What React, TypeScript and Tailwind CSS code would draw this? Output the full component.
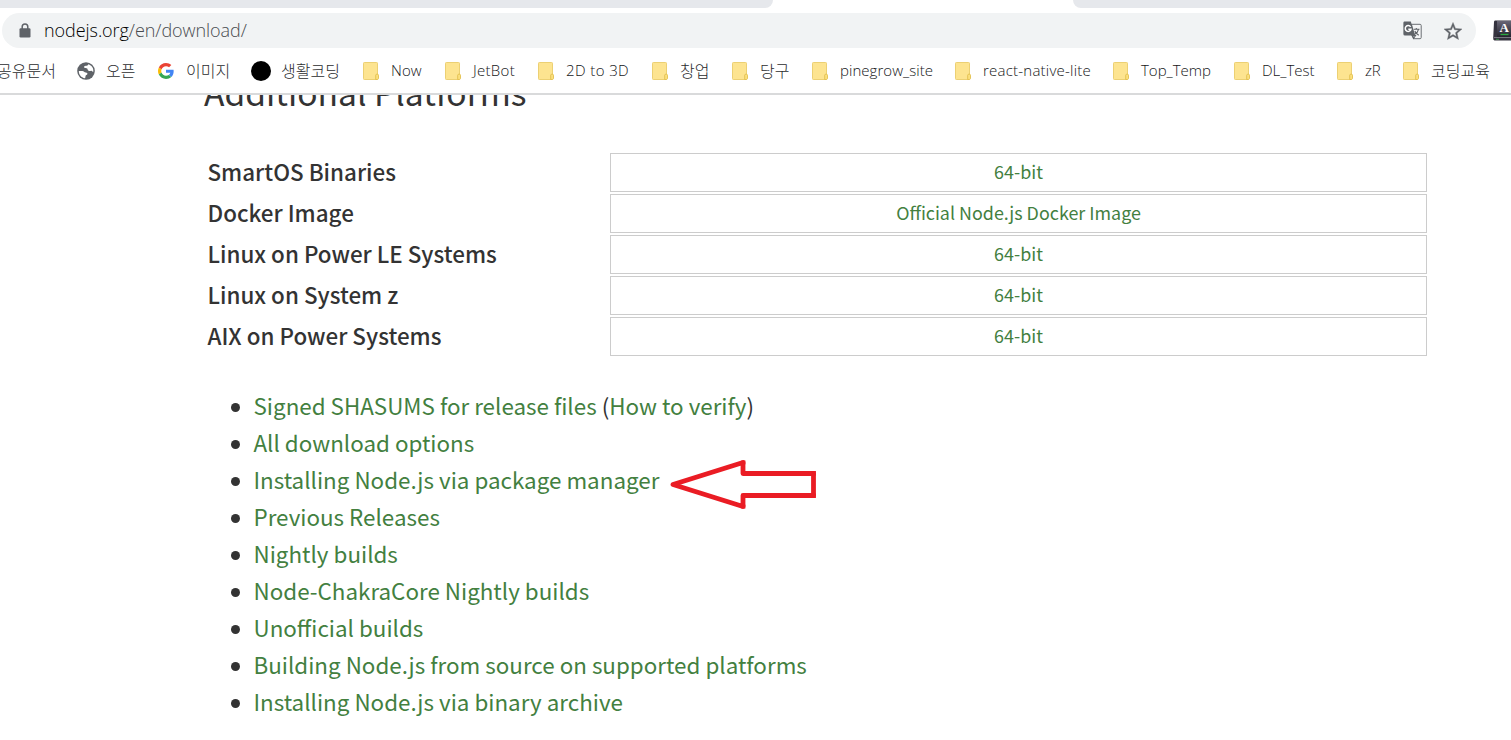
import React from "react";

const sans = "font-['Noto_Sans_CJK_KR','Noto_Sans',sans-serif]";

const GlobeIcon = () => (
  <svg width="18" height="18" viewBox="0 0 18 18">
    <circle cx="9" cy="9" r="8.8" fill="#5f6368" />
    <path d="M1.800 8.900h3.600c1.500 0 1.900 1.600 3.300 1.600 1.400 0 2 .7 1.600 1.800-.3.900-1.800.7-1.800 1.900 0 1-.2 1.600-.6 2C4.200 15.400 1.800 12.700 1.800 8.900Z" fill="#fff" />
    <path d="M11.300 2.200c-.3 1.400-1.200 1.500-2.500 1.500-1.300 0-2 .8-1.600 1.700.5 1 2.300.4 3 1.200.6.700.3 1.700 1.400 2.200 1.200.5 1.900-.3 2.800-.1.900.2.900 1 1.800 1.200C17 6.400 14.900 3.200 11.300 2.200Z" fill="#fff" />
  </svg>
);

const GoogleIcon = () => (
  <svg width="16" height="16" viewBox="0 0 48 48">
    <path fill="#EA4335" d="M24 9.500c3.540 0 6.710 1.220 9.210 3.600l6.850-6.850C35.900 2.380 30.470 0 24 0 14.620 0 6.510 5.380 2.560 13.220l7.980 6.190C12.430 13.720 17.740 9.500 24 9.500z" />
    <path fill="#4285F4" d="M46.980 24.550c0-1.570-.15-3.090-.38-4.550H24v9.020h12.940c-.58 2.960-2.260 5.480-4.780 7.180l7.730 6c4.510-4.180 7.090-10.360 7.090-17.650z" />
    <path fill="#FBBC05" d="M10.530 28.590c-.48-1.450-.76-2.990-.76-4.590s.27-3.140.76-4.590l-7.980-6.190C.92 16.460 0 20.120 0 24c0 3.880.92 7.540 2.560 10.780l7.970-6.190z" />
    <path fill="#34A853" d="M24 48c6.480 0 11.930-2.130 15.890-5.810l-7.730-6c-2.150 1.450-4.920 2.300-8.160 2.300-6.260 0-11.570-4.220-13.470-9.910l-7.980 6.190C6.510 42.620 14.620 48 24 48z" />
  </svg>
);

const FolderIcon = () => (
  <svg width="16" height="18" viewBox="0 0 16 18">
    <rect x="0.500" y="0.500" width="14" height="17" rx="0.800" fill="#fde490" stroke="#ecd073" />
    <path d="M12.700 17.500v-4.300c0-1.500 2.800-1.500 2.800 0v2.800c0 1-.5 1.500-1.500 1.500Z" fill="#fce07e" stroke="#e2bf4f" strokeWidth="0.900" />
  </svg>
);

const LockIcon = () => (
  <svg width="12" height="15" viewBox="0 0 12 15">
    <path d="M3.200 6V3.700a2.800 2.800 0 0 1 5.600 0V6" fill="none" stroke="#5f6368" strokeWidth="1.500" />
    <rect x="0.500" y="5.200" width="11" height="9.200" rx="1.200" fill="#5f6368" />
  </svg>
);

const TranslateIcon = () => (
  <svg width="19" height="19" viewBox="0 0 19 19">
    <path d="M8.500 3.300h8.600c.7 0 1.100.5 1.100 1.200v12c0 .7-.4 1.200-1.100 1.200h-6.600Z" fill="#f4f5f6" stroke="#6b6f73" strokeWidth="1" />
    <path d="M1.800.5h6L12.300 14.600H2A1.600 1.600 0 0 1 .4 13V1.900C.4 1 1 .5 1.800.5Z" fill="#5f6368" />
    <path d="M7.600 5.900A2.900 2.900 0 1 0 8 8.200H5.300" fill="none" stroke="#fff" strokeWidth="1.500" />
    <path d="M10.600 8.300h5.900M13.300 7v1.300M15.500 8.300c-.5 2.300-2 4-3.800 5M11.800 10c.8 1.800 2.300 3.300 4 4.300M9 14.500l1.500 3 2-3Z" fill="none" stroke="#5f6368" strokeWidth="1.100" />
  </svg>
);

const StarIcon = () => (
  <svg width="18" height="18" viewBox="2 2 20 19">
    <path fill="#5f6368" stroke="#5f6368" strokeWidth="0.400" d="M22 9.240l-7.190-.62L12 2 9.190 8.630 2 9.240l5.460 4.730L5.820 21 12 17.270 18.180 21l-1.630-7.030L22 9.240zM12 15.400l-3.760 2.270 1-4.280-3.320-2.880 4.380-.38L12 6.100l1.710 4.040 4.380.38-3.320 2.880 1 4.280L12 15.400z" />
  </svg>
);

const DictionaryIcon = () => (
  <svg width="18" height="21" viewBox="0 0 18 21">
    <defs>
      <linearGradient id="cover" x1="0" y1="0" x2="0" y2="1">
        <stop offset="0" stopColor="#686675" />
        <stop offset="1" stopColor="#24222e" />
      </linearGradient>
    </defs>
    <path d="M2 0.500h16v20H1.500Q0 20 .2 18L1 2Q1 .5 2 .5Z" fill="#34323e" />
    <path d="M4 1h14v16H4Z" fill="url(#cover)" />
    <path d="M1 17.500h17" stroke="#898792" strokeWidth="0.800" />
    <path d="M3 19.300h3" stroke="#368947" strokeWidth="1" />
    <text x="6.500" y="12" fontFamily="Liberation Serif" fontWeight="700" fontSize="13" fill="#fff">A</text>
    <path d="M7.500 14.500h8" stroke="#2ba83f" strokeWidth="1.300" />
  </svg>
);

type Bookmark = { label: string; width: string; tracking?: string; korean?: boolean };

const folders: Bookmark[] = [
  { label: "Now", width: "w-[82px]", tracking: "tracking-[0.1px]" },
  { label: "JetBot", width: "w-[93px]", tracking: "tracking-[0.3px]" },
  { label: "2D to 3D", width: "w-[114px]", tracking: "tracking-[0.4px]" },
  { label: "창업", width: "w-[80px]", korean: true },
  { label: "당구", width: "w-[80px]", korean: true },
  { label: "pinegrow_site", width: "w-[143px]", tracking: "tracking-[0.05px]" },
  { label: "react-native-lite", width: "w-[158px]", tracking: "tracking-[0.22px]" },
  { label: "Top_Temp", width: "w-[121px]", tracking: "tracking-[0px]" },
  { label: "DL_Test", width: "w-[103px]", tracking: "tracking-[0px]" },
  { label: "zR", width: "w-[66px]", tracking: "tracking-[-0.2px]" },
  { label: "코딩교육", width: "w-[108px]", korean: true },
];

const platforms = [
  ["SmartOS Binaries", "64-bit"],
  ["Docker Image", "Official Node.js Docker Image"],
  ["Linux on Power LE Systems", "64-bit"],
  ["Linux on System z", "64-bit"],
  ["AIX on Power Systems", "64-bit"],
];

const links = [
  "All download options",
  "Installing Node.js via package manager",
  "Previous Releases",
  "Nightly builds",
  "Node-ChakraCore Nightly builds",
  "Unofficial builds",
  "Building Node.js from source on supported platforms",
  "Installing Node.js via binary archive",
];

const Arrow = () => (
  <svg className="absolute left-[669px] top-[364px]" width="149" height="51" viewBox="0 0 149 51">
    <path d="M4 25.500L74 3.500V14.500H144.500V36.500H74V47.500Z" fill="none" stroke="#ea1c24" strokeWidth="4.800" strokeLinejoin="round" />
    <path d="M142.100 12.100h4.800v4.800M142.100 38.900h4.800v-4.800M72 1.500h4.400v4M72 49.500h4.400v-4" fill="#ea1c24" />
  </svg>
);

const Item = ({ children }: { children: React.ReactNode }) => (
  <li className="flex h-[37px] items-center">
    <span className="mr-[14px] h-[9px] w-[9px] shrink-0 rounded-full bg-[#333]" />
    <span className="whitespace-nowrap pb-[5px]">{children}</span>
  </li>
);

const koreanText = "pb-px text-[16px] leading-5 font-light whitespace-nowrap text-[#2b2c2e]";
const latinText = "font-['Open_Sans','Noto_Sans',sans-serif] text-[15px] font-light whitespace-nowrap text-[#151618]";

export default function App() {
  return (
    <div className={`flex h-[740px] w-[1511px] flex-col overflow-hidden bg-white ${sans}`}>
      <div className="flex h-2 shrink-0 justify-between">
        <div className="w-[773px] rounded-br-lg bg-[#e6e8ec]" />
        <div className="w-[438px] rounded-bl-lg bg-[#e6e8ec]" />
      </div>
      <div className="mt-[5px] flex h-[35px] shrink-0 items-center pl-0.5">
        <div className="flex h-full w-[1474px] items-center rounded-full bg-[#f1f3f4] pl-[17px] pr-[14px]">
          <LockIcon />
          <span className="ml-[13px] flex-1 pb-px font-['Open_Sans','Noto_Sans',sans-serif] text-[18px] font-light leading-6 tracking-[-0.06px] text-[#484b4f]">
            <span className="text-black">nodejs.org</span>/en/download/
          </span>
          <TranslateIcon />
          <span className="ml-[22px]"><StarIcon /></span>
        </div>
        <span className="ml-[17px] w-[18px] shrink-0"><DictionaryIcon /></span>
      </div>
      <div className="flex h-[47px] shrink-0 items-center overflow-hidden border-b-2 border-[#d9dadb]">
        <div className="flex w-[77px] shrink-0"><span className={`-ml-[3px] ${koreanText}`}>공유문서</span></div>
        <div className="flex w-[81px] shrink-0 items-center gap-[11px]"><GlobeIcon /><span className={koreanText}>오픈</span></div>
        <div className="flex w-[93px] shrink-0 items-center gap-[12px]"><GoogleIcon /><span className={koreanText}>이미지</span></div>
        <div className="flex w-[112px] shrink-0 items-center gap-[10px]"><span className="h-5 w-5 rounded-full bg-black" /><span className={koreanText}>생활코딩</span></div>
        {folders.map((f) => (
          <div key={f.label} className={`flex shrink-0 items-center gap-[12px] ${f.width}`}>
            <FolderIcon />
            <span className={f.korean ? koreanText : `${latinText} ${f.tracking}`}>{f.label}</span>
          </div>
        ))}
      </div>
      <main className="relative flex flex-1 flex-col overflow-hidden text-[#333]">
        <div className="flex h-[58px] shrink-0 pl-[204px]">
          <h2 className="-mt-[27px] text-[33.6px] leading-[48px]">Additional Platforms</h2>
        </div>
        <div className="flex flex-col gap-0.5 pl-[207.5px]">
          {platforms.map(([name, link]) => (
            <div key={name} className="flex h-[39px] items-center">
              <span className="w-[402.5px] pb-[3px] text-[22.4px] font-medium leading-8">{name}</span>
              <a className="flex h-full w-[817px] items-center justify-center border border-[#ccc] pb-0.5 text-[17.9px] text-[#43803f]">{link}</a>
            </div>
          ))}
        </div>
        <ul className="mt-[33px] pl-[230.5px] text-[22.4px] leading-[34px] text-[#43803f]">
          <Item>
            Signed SHASUMS for release files <span className="text-[#333]">(</span>How to verify<span className="text-[#333]">)</span>
          </Item>
          {links.map((l) => <Item key={l}>{l}</Item>)}
        </ul>
        <Arrow />
      </main>
    </div>
  );
}
